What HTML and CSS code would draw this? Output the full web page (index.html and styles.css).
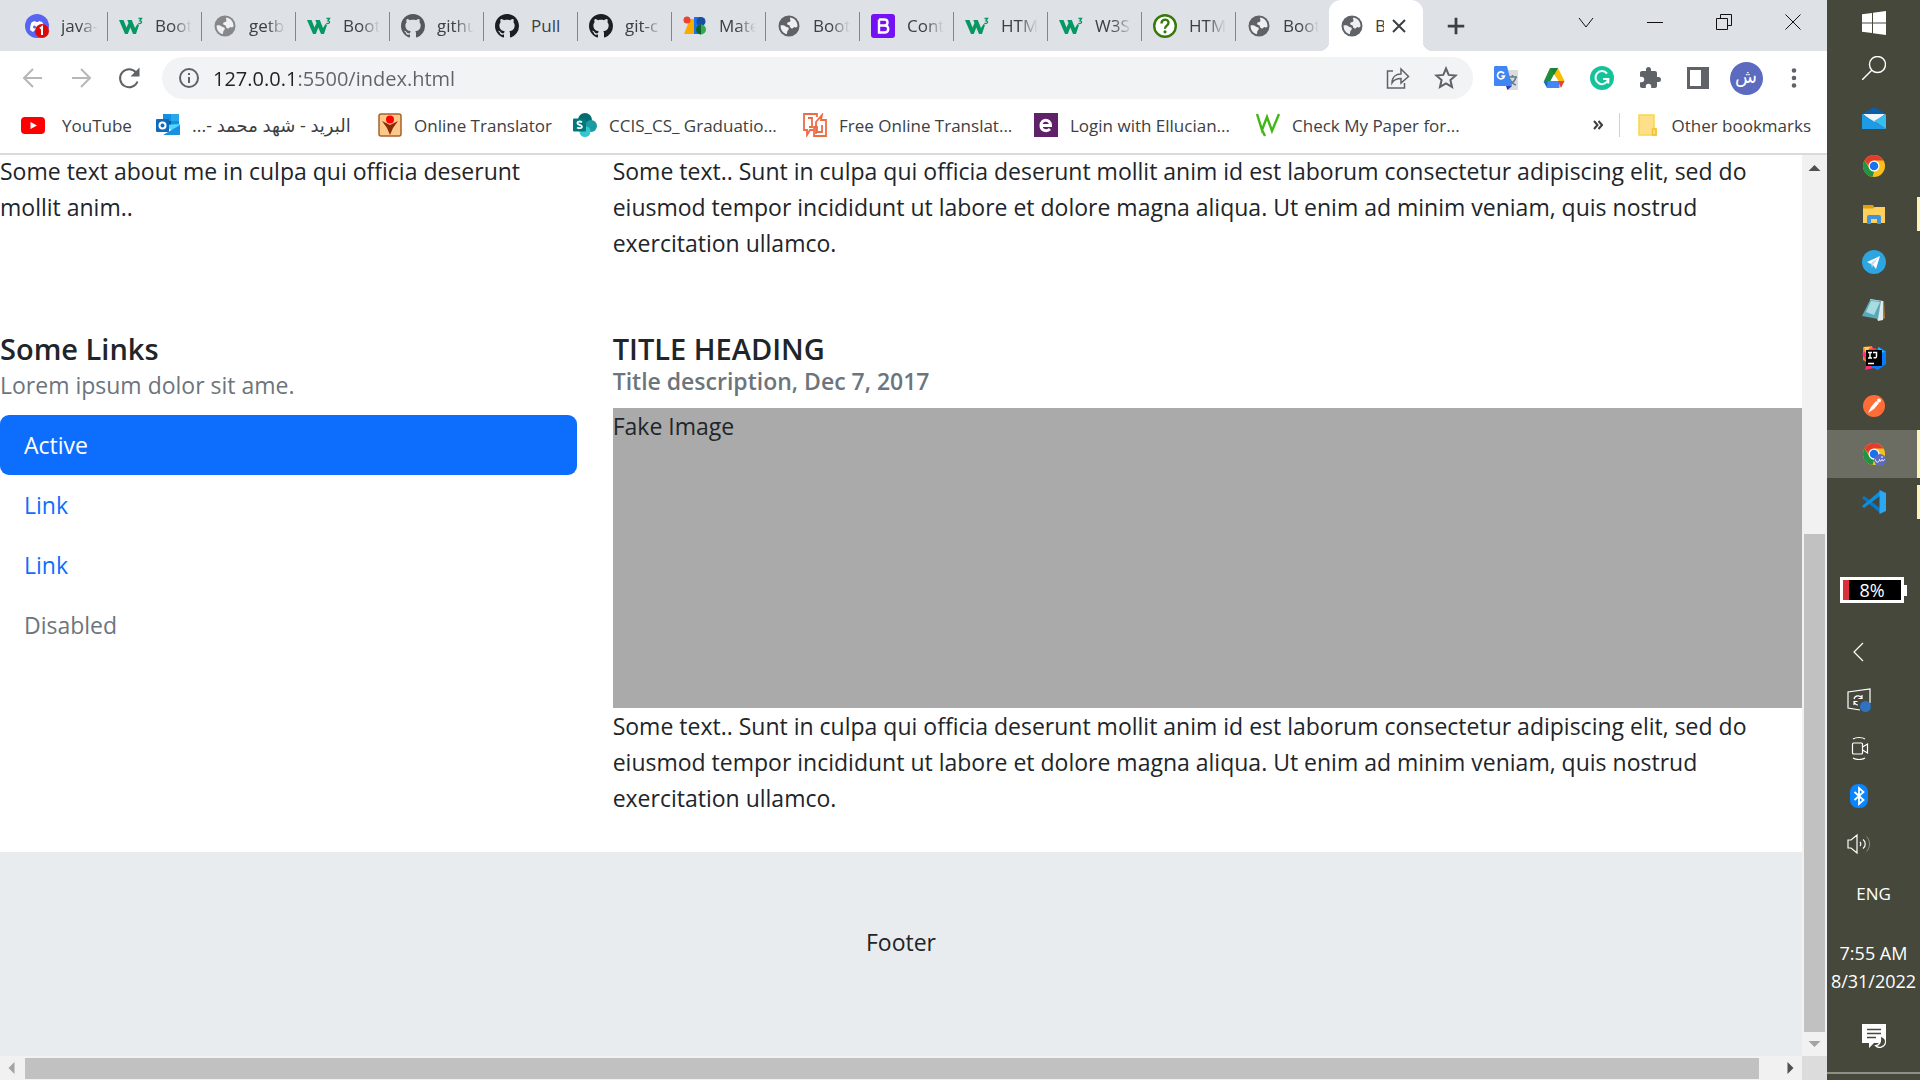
FILE: index.html
```html
<!DOCTYPE html>
<html lang="en">
<head>
<meta charset="utf-8">
<title>Bootstrap Page</title>
<link rel="stylesheet" href="styles.css">
</head>
<body>
<svg class="sprite" aria-hidden="true">
  <symbol id="w3" viewBox="0 0 24 24"><path fill="#059862" d="M0 6h4.500l3 7.500L9.500 9 8.300 6h4.500l3.200 8 2.500-4 1.500 1-3 9h-3l-2.700-6.500L8.800 20H6z"/><path fill="none" stroke="#059862" stroke-width="1.300" d="M19.500 4.500h3l-1.600 2.300c2.600 0 2.300 3.400-1.600 2.600"/></symbol>
  <symbol id="globe" viewBox="0 0 24 24"><circle cx="12" cy="12" r="10.500" fill="currentColor"/><path fill="#eef0f2" d="M13.500 3.600c3.900.8 6.900 4 7 8.400-.4 1.500-1.400 1.600-2.500 1.200-1.600-.6-1.500 1.700-3.400 1.200-2.300-.7-1-2.700-2.600-3.100-1.900-.3-2.400-1.500-1.400-2.700.8-1 2.500-.3 2.800-1.700.3-1.200-.8-2-.3-2.800zM3.600 11.500c1.700-.4 3.800-.2 5.100 1 .9.900 2.800.3 3.100 1.900.3 1.500-1.300 1.700-1.500 3-.1 1.100-.3 2-.6 2.800-3.600-1-6.300-4.400-6.100-8.700z"/></symbol>
  <symbol id="github" viewBox="0 0 16 16"><path fill="currentColor" d="M8 0C3.580 0 0 3.580 0 8c0 3.540 2.290 6.530 5.470 7.590.4.070.55-.17.55-.38 0-.19-.01-.82-.01-1.490-2.010.37-2.530-.49-2.690-.94-.09-.23-.48-.94-.82-1.130-.28-.15-.68-.52-.01-.53.63-.01 1.080.58 1.230.82.72 1.210 1.870.87 2.330.66.070-.52.28-.87.51-1.070-1.780-.2-3.640-.89-3.640-3.950 0-.87.31-1.590.82-2.150-.08-.2-.36-1.020.08-2.120 0 0 .67-.21 2.200.82.64-.18 1.320-.27 2-.27s1.360.09 2 .27c1.530-1.040 2.200-.82 2.200-.82.44 1.100.16 1.920.08 2.120.51.56.82 1.270.82 2.150 0 3.070-1.870 3.750-3.650 3.950.29.25.54.73.54 1.480 0 1.070-.01 1.930-.01 2.200 0 .21.15.46.55.38A8.010 8.010 0 0 0 16 8c0-4.420-3.580-8-8-8z"/></symbol>
  <symbol id="chrome" viewBox="0 0 24 24"><circle cx="12" cy="12" r="11" fill="#fbc116"/><path fill="#229342" d="M2.500 6.500 8 15l4 3-1.500 5A11 11 0 0 1 2.500 6.500z"/><path fill="#e33b2e" d="M2.500 6.500A11 11 0 0 1 21.500 6.500H12L7 12z"/><circle cx="12" cy="12" r="5.500" fill="#fff"/><circle cx="12" cy="12" r="4.300" fill="#1a73e8"/></symbol>
</svg>

<div class="screen">
  <div class="browser">
    <div class="tab-strip">
      <button class="tab"><svg class="icon" viewBox="0 0 24 24"><circle cx="12" cy="12" r="12" fill="#5865f2"/><path fill="#fff" d="M5 16c0-4 1-7 2-8l3-1 1 1h2l1-1 3 1c1 1 2 4 2 8l-3 2-2-2h-4l-2 2z"/><circle cx="9.500" cy="13" r="1.500" fill="#5865f2"/><circle cx="17" cy="17" r="7" fill="#dc0b0b"/><path fill="none" stroke="#fff" stroke-width="2" d="M15 14.500l2-1.500v8"/></svg><span class="tab-title">java-</span></button>
      <button class="tab"><svg class="icon"><use href="#w3"/></svg><span class="tab-title">Boot</span></button>
      <button class="tab"><svg class="icon faded"><use href="#globe"/></svg><span class="tab-title">getb</span></button>
      <button class="tab"><svg class="icon"><use href="#w3"/></svg><span class="tab-title">Boot</span></button>
      <button class="tab"><svg class="icon soft"><use href="#github"/></svg><span class="tab-title">githu</span></button>
      <button class="tab"><svg class="icon dark"><use href="#github"/></svg><span class="tab-title clear">Pull</span></button>
      <button class="tab"><svg class="icon dark"><use href="#github"/></svg><span class="tab-title">git-c</span></button>
      <button class="tab"><svg class="icon" viewBox="0 0 24 24"><path fill="#f9ab00" d="M7 5h4v15H1z"/><circle cx="4" cy="6" r="3.500" fill="#ea4335"/><path fill="#1a73e8" d="M11 3h7v17h-7z"/><circle cx="18" cy="7.500" r="4.500" fill="#174ea6"/><circle cx="18" cy="15.500" r="5" fill="#34a853"/><path fill="#0d652d" d="M18 10.500v10a5 5 0 0 1 0-10z"/></svg><span class="tab-title">Mate</span></button>
      <button class="tab"><svg class="icon"><use href="#globe"/></svg><span class="tab-title">Boot</span></button>
      <button class="tab"><svg class="icon" viewBox="0 0 24 24"><rect width="24" height="24" rx="3" fill="#7411f5"/><path fill="none" stroke="#fff" stroke-width="2.400" d="M8 5.500h5.500c4 0 4 6 0 6H8m5.500 0c5 0 5 7 0 7H8v-13"/></svg><span class="tab-title">Cont</span></button>
      <button class="tab"><svg class="icon"><use href="#w3"/></svg><span class="tab-title">HTM</span></button>
      <button class="tab"><svg class="icon"><use href="#w3"/></svg><span class="tab-title">W3S</span></button>
      <button class="tab"><svg class="icon" viewBox="0 0 24 24"><circle cx="12" cy="12" r="10.800" fill="#fff" stroke="#37790a" stroke-width="2.400"/><path fill="none" stroke="#37790a" stroke-width="2.400" d="M8.500 9.500c0-5 7-5 7-.8 0 3-3.500 2.800-3.500 6"/><circle cx="12" cy="17.800" r="1.600" fill="#37790a"/></svg><span class="tab-title">HTM</span></button>
      <button class="tab last"><svg class="icon"><use href="#globe"/></svg><span class="tab-title">Boot</span></button>
      <button class="tab active"><svg class="icon"><use href="#globe"/></svg><span class="tab-title clear">B</span><svg class="tab-close" viewBox="0 0 16 16"><path d="M2 2l12 12M14 2L2 14"/></svg></button>
      <button class="new-tab" aria-label="New tab"><svg class="icon" viewBox="0 0 24 24"><path d="M12 3v18M3 12h18"/></svg></button>
      <div class="window-controls">
        <button aria-label="Search tabs"><svg viewBox="0 0 16 16"><path d="M1 4l7 9 7-9"/></svg></button>
        <button aria-label="Minimize"><svg viewBox="0 0 16 16"><path d="M0 8.500h16"/></svg></button>
        <button aria-label="Restore"><svg viewBox="0 0 16 16"><path d="M.5 4.500h11v11H.5zM4.500 4V.5h11v11H12"/></svg></button>
        <button aria-label="Close"><svg viewBox="0 0 16 16"><path d="M.5.5l15 15M15.500.5l-15 15"/></svg></button>
      </div>
    </div>

    <div class="toolbar">
      <button class="tool pale" aria-label="Back"><svg class="icon" viewBox="0 0 24 24"><path class="line" d="M21 12H4M12 3l-9 9 9 9"/></svg></button>
      <button class="tool pale" aria-label="Forward"><svg class="icon" viewBox="0 0 24 24"><path class="line" d="M3 12h17M12 3l9 9-9 9"/></svg></button>
      <button class="tool" aria-label="Reload"><svg class="icon" viewBox="0 0 24 24"><path class="line" d="M20.500 15.500A9 9 0 1 1 19 6.500"/><path fill="currentColor" d="M22.500 1.500v9h-9z"/></svg></button>
      <div class="omnibox">
        <svg class="icon" viewBox="0 0 24 24"><circle class="line" cx="12" cy="12" r="9"/><path class="line" d="M12 11v6M12 7v2"/></svg>
        <input class="url" type="text" aria-label="Address" value="127.0.0.1:5500/index.html">
        <button class="tool" aria-label="Share"><svg class="icon" viewBox="0 0 24 24"><path class="line thin" d="M7 5H1.500v17h17v-5"/><path class="line thin" d="M6 17c0-6 4-9 9-9V3l7.500 7.500L15 17v-4.500c-4 0-7 1-9 4.500z"/></svg></button>
        <button class="tool" aria-label="Bookmark"><svg class="icon" viewBox="0 0 24 24"><path class="line" d="M12 2.500l2.700 6.400 7 .6-5.300 4.600 1.600 6.800-6-3.600-6 3.600 1.600-6.800-5.300-4.600 7-.6z"/></svg></button>
      </div>
      <button class="tool" aria-label="Translate"><svg class="icon" viewBox="0 0 24 24"><path fill="#dadce0" d="M10 4h14v20H13z"/><path fill="none" stroke="#607d8b" stroke-width="1.600" d="M14 11h9M18.500 9v2M22 11c-1 4-3 6-7 8M16 13c1 3 3 5 6 6"/><path fill="#4286f4" d="M1 0h12l5 20H1a1 1 0 0 1-1-1V1z"/><path fill="#2b3fae" d="M12 20h6l-4.500 4z"/><path fill="none" stroke="#fff" stroke-width="1.700" d="M10 7.500a3.500 3.500 0 1 0 .4 2.700H7.500"/></svg></button>
      <button class="tool" aria-label="Drive"><svg class="icon" viewBox="0 0 24 24"><path fill="#1e8e3e" d="M8 2h4l0 6L6 21l-4-6z"/><path fill="#fbbc04" d="M8 2h8l6.500 13h-6z"/><path fill="#188038" d="M8 2h8l-4 7z"/><path fill="#4285f4" d="M5.500 15h12v7H5z"/><path fill="#1967d2" d="M5.500 15L1.500 15.500 5 22z"/><path fill="#ea4335" d="M16 15h6.500L19 22z"/><path fill="#fff" d="M12 9l3.500 6h-7z"/></svg></button>
      <button class="tool" aria-label="Grammarly"><svg class="icon" viewBox="0 0 24 24"><circle cx="12" cy="12" r="12" fill="#15c39a"/><path fill="none" stroke="#fff" stroke-width="2" d="M17 7.500A6.500 6.500 0 1 0 18.300 13H13M18.300 13v4.500"/></svg></button>
      <button class="tool" aria-label="Extensions"><svg class="icon" viewBox="0 0 24 24"><path fill="currentColor" d="M20.500 11H19V7c0-1.100-.9-2-2-2h-4V3.500a2.500 2.500 0 0 0-5 0V5H4c-1.100 0-2 .9-2 2v3.800h1.500a2.700 2.700 0 0 1 0 5.400H2V20c0 1.100.9 2 2 2h3.800v-1.500a2.700 2.700 0 0 1 5.400 0V22H17c1.100 0 2-.9 2-2v-4h1.500a2.500 2.500 0 0 0 0-5z"/></svg></button>
      <button class="tool" aria-label="Side panel"><svg class="icon" viewBox="0 0 24 24"><path fill="currentColor" fill-rule="evenodd" d="M1 1h22v22H1zM4 4v16h11V4z"/></svg></button>
      <button class="tool" aria-label="Profile"><span class="avatar">ش</span></button>
      <button class="tool" aria-label="Menu"><svg class="icon" viewBox="0 0 24 24"><g fill="currentColor"><circle cx="12" cy="4.500" r="2.300"/><circle cx="12" cy="12" r="2.300"/><circle cx="12" cy="19.500" r="2.300"/></g></svg></button>
    </div>

    <nav class="bookmarks" aria-label="Bookmarks">
      <a class="bookmark wide-gap" href="#"><svg class="icon" viewBox="0 0 24 24"><rect y="4" width="24" height="17" rx="4" fill="#f00"/><path fill="#fff" d="M9.500 9l6.500 3.500L9.500 16z"/></svg>YouTube</a>
      <a class="bookmark" href="#"><svg class="icon" viewBox="0 0 24 24"><path fill="#1490df" d="M7 1h16v14H7z"/><path fill="#28a8ea" d="M15 1h8v7h-8z"/><path fill="#0a5ea8" d="M7 8h8v7H7z"/><path fill="#50d9ff" d="M7 12l17 10V11z"/><path fill="#1a8fe0" d="M7 22l17-10v9a1 1 0 0 1-1 1z"/><rect y="6" width="13" height="13" rx="1" fill="#0f6cbd"/><circle cx="6.500" cy="12.500" r="3" fill="none" stroke="#fff" stroke-width="2"/></svg><span class="arabic" dir="rtl">البريد - شهد محمد -...</span></a>
      <a class="bookmark" href="#"><svg class="icon" viewBox="0 0 24 24"><rect x="1" y="1" width="22" height="22" rx="2" fill="#fdc88c" stroke="#a5622b" stroke-width="1.500"/><path fill="#8b2a05" d="M4 8l8 4 8-4-5 7-3 7-3-7z"/><circle cx="12" cy="6.500" r="4" fill="#f00"/></svg>Online Translator</a>
      <a class="bookmark" href="#"><svg class="icon" viewBox="0 0 24 24"><circle cx="12" cy="7" r="7" fill="#036c70"/><circle cx="18" cy="13" r="6" fill="#1a9ba1"/><circle cx="12" cy="18.500" r="5.500" fill="#37c6d0"/><rect y="5.500" width="13" height="13" rx="1" fill="#03787c"/><path fill="none" stroke="#fff" stroke-width="1.800" d="M9 9.300c-2-1.400-4.700-.8-4.600.8.100 2.100 4.800 1.400 4.600 3.700-.2 1.800-3.200 1.700-4.900.6"/></svg>CCIS_CS_ Graduatio...</a>
      <a class="bookmark" href="#"><svg class="icon" viewBox="0 0 24 24"><path fill="none" stroke="#ee6c45" stroke-width="1.800" d="M14 4V1H1v16h3v5l3-5h3M5 5h4v9H6M13 21V9l6-7-1 5h5v16H11v-9h3v5h5v-7"/></svg>Free Online Translat...</a>
      <a class="bookmark" href="#"><svg class="icon" viewBox="0 0 24 24"><rect width="24" height="24" fill="#5f2167"/><path fill="none" stroke="#fff" stroke-width="3" d="M7 12.500h9.500c0-7-9.500-7-9.500 0 0 5.500 6 6.500 9 3.500"/></svg>Login with Ellucian...</a>
      <a class="bookmark" href="#"><svg class="icon" viewBox="0 0 24 24"><path fill="none" stroke="#43b516" stroke-width="2.400" d="M1 1l5 16L11 4l5 14L23 1M6 17l3 6"/></svg>Check My Paper for...</a>
      <div class="bookmark-tail">
        <button class="more" aria-label="More bookmarks"><svg viewBox="0 0 10 10"><path d="M1 1l3.500 4L1 9M5.500 1L9 5 5.500 9"/></svg></button>
        <a class="bookmark folder" href="#"><svg class="icon" viewBox="0 0 24 24"><path fill="#ffe08a" stroke="#f9d648" stroke-width="1.500" d="M4 2h15v13l2 1v6H4z"/><path fill="none" stroke="#f1c232" stroke-width="1.500" d="M17.500 22v-6h3.500v6z"/></svg>Other bookmarks</a>
      </div>
    </nav>

    <div class="viewport">
      <main class="page">
        <div class="row">
          <section class="col-4">
            <p>Some text about me in culpa qui officia deserunt mollit anim..</p>
          </section>
          <section class="col-8">
            <p>Some text.. Sunt in culpa qui officia deserunt mollit anim id est laborum consectetur adipiscing elit, sed do eiusmod tempor incididunt ut labore et dolore magna aliqua. Ut enim ad minim veniam, quis nostrud exercitation ullamco.</p>
          </section>
        </div>
        <div class="row">
          <section class="col-4">
            <h3>Some Links</h3>
            <p class="muted">Lorem ipsum dolor sit ame.</p>
            <ul class="pills">
              <li><a class="active" href="#">Active</a></li>
              <li><a href="#">Link</a></li>
              <li><a href="#">Link</a></li>
              <li><a class="disabled" aria-disabled="true">Disabled</a></li>
            </ul>
          </section>
          <section class="col-8">
            <h3>TITLE HEADING</h3>
            <h5>Title description, Dec 7, 2017</h5>
            <div class="fake-image">Fake Image</div>
            <p>Some text.. Sunt in culpa qui officia deserunt mollit anim id est laborum consectetur adipiscing elit, sed do eiusmod tempor incididunt ut labore et dolore magna aliqua. Ut enim ad minim veniam, quis nostrud exercitation ullamco.</p>
          </section>
        </div>
        <footer>Footer</footer>
      </main>
      <div class="scroll vertical">
        <svg class="arrow" viewBox="0 0 24 24"><path fill="#505050" d="M6 16l6-6 6 6z"/></svg>
        <div class="track"><div class="thumb"></div></div>
        <svg class="arrow" viewBox="0 0 24 24"><path fill="#a3a3a3" d="M6 9l6 6 6-6z"/></svg>
      </div>
      <div class="scroll horizontal">
        <svg class="arrow" viewBox="0 0 24 24"><path fill="#a3a3a3" d="M14 6l-6 6 6 6z"/></svg>
        <div class="track"><div class="thumb"></div></div>
        <svg class="arrow" viewBox="0 0 24 24"><path fill="#505050" d="M10 6l6 6-6 6z"/></svg>
      </div>
      <div class="corner"></div>
    </div>
  </div>

  <aside class="taskbar">
    <button class="system" aria-label="Start"><svg class="icon" viewBox="0 0 24 24"><path fill="#fff" d="M0 3.300L10 2v9.500H0zM11 1.800L24 0v11.500H11zM0 12.500h10V22L0 20.700zM11 12.500h13V24l-13-1.800z"/></svg></button>
    <button class="system" aria-label="Search"><svg class="icon" viewBox="0 0 24 24"><path fill="none" stroke="#fff" stroke-width="1.400" d="M0 24l10-10"/><circle cx="15.500" cy="8.500" r="8" fill="none" stroke="#fff" stroke-width="1.400"/></svg></button>
    <div class="apps">
      <button class="app" aria-label="Mail"><svg class="icon" viewBox="0 0 24 24"><path fill="#0a5dae" d="M0 8l12-7 12 7v3H0z"/><path fill="#f4f4f4" d="M1 8h22l-11 9z"/><path fill="#1d9be6" d="M0 8l13 8 11 7H0z"/><path fill="#38bdf2" d="M24 8v15L12 15z"/></svg></button>
      <button class="app" aria-label="Chrome"><svg class="icon"><use href="#chrome"/></svg></button>
      <button class="app open" aria-label="File Explorer"><svg class="icon" viewBox="0 0 24 24"><path fill="#e19f0c" d="M1 3h10l1 2v3H1z"/><path fill="#ffd15c" d="M1 6.500h10L12.500 5H23v16H1z"/><path fill="#3f95dd" d="M5 22v-7a2 2 0 0 1 2-2h10a2 2 0 0 1 2 2v7h-4v-5H9v5z"/></svg></button>
      <button class="app" aria-label="Telegram"><svg class="icon" viewBox="0 0 24 24"><circle cx="12" cy="12" r="12" fill="#2ca5e0"/><path fill="#fff" d="M5 12l13-6-4 13-3-4z"/><path fill="#c8daea" d="M9 13l7-5-5 7-1 3z"/></svg></button>
      <button class="app" aria-label="Notepad"><svg class="icon" viewBox="0 0 24 24"><path fill="#b07b35" d="M19 3h3l1 17-3 2z"/><path fill="#dfe9ec" d="M8 1l13 2v19l-5 1z"/><path fill="#5ba9b8" d="M8 2l11 1-3 18L0 18z"/><path fill="#a9dbe3" d="M9 3l9 1-6 13-8-3z"/></svg></button>
      <button class="app" aria-label="IntelliJ IDEA"><svg class="icon" viewBox="0 0 24 24"><path fill="#fc801d" d="M1 1l9-1 3 8-7 9-5-3z"/><path fill="#fe2d78" d="M0 8l6-5 8-1-2 20-9 2 2-8z"/><path fill="#fcd34d" d="M2 1l6 0-4 7z"/><path fill="#087cfa" d="M13 5l4-4 7 4v13l-8 6-7-3z"/><path fill="#21c8e8" d="M16 1l7 5-6 1z"/><path d="M4 4h16v16H4z"/><path fill="none" stroke="#fff" stroke-width="1.500" d="M6 6.500h4M8 6.500v5M6 12h4M11 6.500h3.500V10c0 2-1 2-3 1.500M6 17.500h6"/></svg></button>
      <button class="app" aria-label="Postman"><svg class="icon" viewBox="0 0 24 24"><circle cx="12" cy="12" r="11" fill="#ff6c37"/><circle cx="17" cy="6.500" r="2" fill="#fff"/><path fill="#fff" d="M14 7l3 2-5 6-6 4 3-6z"/></svg></button>
      <button class="app open current" aria-label="Chrome"><svg class="icon" viewBox="0 0 24 24"><use href="#chrome"/><circle cx="18" cy="18" r="6" fill="#5c6bc0"/><path fill="none" stroke="#fff" d="M13.500 17.500c0 4 4 3 4 0 .5 2 2 2 2.500 0 .5 2 2 1.500 2.500-.5M19 15h2"/></svg></button>
      <button class="app open" aria-label="Visual Studio Code"><svg class="icon" viewBox="0 0 24 24"><path fill="#0879c8" d="M0 8l2-2 16 12v5z"/><path fill="#0c8fdf" d="M0 16l2 2L18 6V1z"/><path fill="#2aa8f4" d="M17.500 0L24 3v18l-6.500 3z"/></svg></button>
    </div>
    <div class="battery">8%</div>
    <div class="tray">
      <button class="app" aria-label="Show hidden icons"><svg class="icon" viewBox="0 0 24 24"><path class="stroke" d="M16 3l-9 9 9 9"/></svg></button>
      <button class="app" aria-label="Sync"><svg class="icon" viewBox="0 0 24 24"><path class="stroke" d="M13 22L1 20V4l22-3v14"/><path class="stroke" d="M7 11c1-4 6-4 8-1m0-3v3.500h-3.500M7 17v-3.500h3.500M7 14c1 2 3 3 4 3"/><circle cx="18.500" cy="18.500" r="5.500" fill="#2f72bd"/></svg></button>
      <button class="app" aria-label="Camera"><svg class="icon" viewBox="0 0 24 24"><rect class="stroke" x="5.500" y="7" width="10" height="11" rx="1"/><path class="stroke" d="M15.500 11l5-3v9l-5-3M6 3c3-2 9-2 12 0M6 22c3 2 9 2 12 0"/></svg></button>
      <button class="app" aria-label="Bluetooth"><svg class="icon" viewBox="0 0 24 24"><rect x="3" width="18" height="24" rx="8" fill="#0a84ff"/><path fill="none" stroke="#fff" stroke-width="1.800" d="M7.500 8l9 8-4.500 4V4l4.500 4-9 8"/></svg></button>
      <button class="app" aria-label="Volume"><svg class="icon" viewBox="0 0 24 24"><path class="stroke" d="M1 8h3l6-5v18l-6-5H1zM13 10c1 1 1 3 0 4M16 7.500c3 2 3 7 0 9"/><path fill="none" stroke="#8b8d80" d="M19.500 4.500c4 4 4 11 0 15"/></svg></button>
    </div>
    <div class="language">ENG</div>
    <div class="clock"><span>7:55 AM</span><span>8/31/2022</span></div>
    <button class="app" aria-label="Notifications"><svg class="icon" viewBox="0 0 24 24"><path fill="#fff" d="M0 0h24v19H12l-5 5v-5H0z"/><path stroke="#46483b" stroke-width="1.500" d="M5 5.500h14M5 9.500h14M5 13.500h9"/><path fill="#46483b" stroke="#fff" stroke-width="1.200" d="M18 12.500c4 0 6 3 5.500 6-1 5-7 6.500-10 3 4 0 6-4 4.500-9z"/></svg></button>
    <div class="show-desktop"></div>
  </aside>
</div>
</body>
</html>
```
FILE: styles.css
```css
* { box-sizing: border-box; }

body {
  margin: 0;
  font-family: "Open Sans", "Noto Sans", "DejaVu Sans", sans-serif;
  color: #212529;
}

button {
  display: flex;
  align-items: center;
  justify-content: center;
  padding: 0;
  border: 0;
  background: none;
  color: inherit;
  font: inherit;
}

a { color: inherit; text-decoration: none; }

.sprite { display: none; }

.icon { flex: none; width: 24px; height: 24px; display: block; }

.line { fill: none; stroke: currentColor; stroke-width: 2; }
.thin { stroke-width: 1.5; }

.screen { display: flex; min-height: 100vh; }

.browser {
  flex: 1;
  min-width: 0;
  display: flex;
  flex-direction: column;
  background: #fff;
}

/* Tabs */
.tab-strip {
  display: flex;
  align-items: flex-start;
  height: 51px;
  padding-left: 14px;
  background: #dee1e6;
  color: #3c4043;
  font-size: 17px;
}

.tab {
  position: relative;
  flex: 0 1 94px;
  min-width: 0;
  height: 51px;
  gap: 12px;
  padding: 0 7px 0 11px;
  justify-content: flex-start;
}

.tab .icon { color: #5f6368; }
.tab .faded { color: #85878a; }
.tab .soft { color: #55585c; }
.tab .dark { color: #1b1f23; }

.tab::after {
  content: "";
  position: absolute;
  right: 0;
  top: 12px;
  width: 1px;
  height: 29px;
  background: #80868b;
}

.tab-title {
  flex: 1;
  min-width: 0;
  overflow: hidden;
  white-space: nowrap;
  text-align: left;
  -webkit-mask-image: linear-gradient(to right, #000 45%, transparent 92%);
  mask-image: linear-gradient(to right, #000 45%, transparent 92%);
}

.tab-title.clear { -webkit-mask-image: none; mask-image: none; }

.tab.last { flex-basis: 93px; }
.tab.last::after { display: none; }

.tab.active {
  gap: 11px;
  padding-right: 16px;
  background: #fff;
  border-radius: 12px 12px 0 0;
}

.tab.active .tab-title { margin-right: -4px; }

.tab.active::before,
.tab.active::after {
  content: "";
  position: absolute;
  top: auto;
  bottom: 0;
  width: 9px;
  height: 9px;
}

.tab.active::before {
  left: -9px;
  background: radial-gradient(circle at 0 0, transparent 9px, #fff 9px);
}

.tab.active::after {
  right: -9px;
  background: radial-gradient(circle at 100% 0, transparent 9px, #fff 9px);
}

.tab-close { flex: none; width: 16px; height: 16px; }
.tab-close path { stroke: #3c4043; stroke-width: 2; }

.new-tab { width: 66px; height: 51px; }
.new-tab .icon { width: 22px; height: 22px; }
.new-tab path { stroke: #3c4043; stroke-width: 3; }

.window-controls { display: flex; margin-left: auto; }
.window-controls button { width: 69px; height: 44px; }
.window-controls svg { width: 16px; height: 16px; }
.window-controls path { fill: none; stroke: #111; stroke-width: 1; }

/* Toolbar */
.toolbar {
  display: flex;
  align-items: center;
  padding: 6px 9px 0;
  color: #5f6368;
}

.tool { flex: none; width: 48px; height: 42px; }
.pale { color: #b5b7ba; }

.omnibox {
  flex: 1;
  display: flex;
  align-items: center;
  height: 42px;
  margin: 0 9px;
  padding: 0 3px 0 15px;
  border-radius: 21px;
  background: #f1f3f4;
}

.url {
  flex: 1;
  min-width: 0;
  padding: 0 12px;
  border: 0;
  outline: 0;
  font: inherit;
  font-size: 20px;
  color: transparent;
  background: linear-gradient(to right, #202124 94px, #5f6368 94px);
  -webkit-background-clip: text;
  background-clip: text;
}

.avatar {
  width: 33px;
  height: 33px;
  border-radius: 50%;
  background: #5c6bc0;
  color: #fff;
  font-size: 18px;
  line-height: 28px;
}

/* Bookmarks */
.bookmarks {
  display: grid;
  grid-template-columns: 135px 222px 195px 230px 231px 222px 1fr auto;
  align-items: center;
  height: 56px;
  padding: 0 16px 2px 21px;
  border-bottom: 2px solid #d9dadc;
  color: #3c4043;
  font-size: 17px;
  white-space: nowrap;
}

.bookmark { display: flex; align-items: center; gap: 12px; }
.wide-gap { gap: 17px; }
.arabic { font-size: 18px; }

.bookmark-tail { display: flex; align-items: center; }

.more { width: 42px; height: 24px; }
.more svg { width: 10px; height: 10px; }
.more path { fill: none; stroke: #3c4043; stroke-width: 2; }

.folder {
  padding-left: 15px;
  border-left: 1px solid #cfd1d4;
}

/* Page and scroll bars */
.viewport {
  flex: 1;
  display: grid;
  grid-template: 1fr 24px / 1fr 25px;
}

.page {
  display: flex;
  flex-direction: column;
  min-width: 0;
  overflow: hidden;
  font-size: 23px;
  line-height: 36px;
}

.row { display: flex; margin: 0 -18px 36px; }

.row:first-child { margin-bottom: 46px; }

.col-4, .col-8 { padding: 0 18px; min-width: 0; }
.col-4 { flex: 0 0 calc(100% / 3); }
.col-8 { flex: 0 0 calc(200% / 3); }

.row:first-child p { margin: -2px 0 24px; }

p { margin: 0; }

h3 {
  margin: 0;
  font-size: 29px;
  font-weight: 600;
  line-height: 36px;
}

h5 {
  margin: 0 0 12px;
  color: #6c757d;
  font-size: 23px;
  font-weight: 600;
  line-height: 29px;
}

.muted { margin-bottom: 12px; color: #6c757d; }

.pills { margin: 0; padding: 0; list-style: none; }

.pills a {
  display: block;
  padding: 12px 24px;
  border-radius: 9px;
  color: #0d6efd;
}

.pills .active { background: #0d6efd; color: #fff; }
.pills .disabled { color: #6c757d; }

.fake-image { height: 300px; background: #aaa; }

footer {
  flex: 1;
  padding: 72px 0;
  background: #e8ecef;
  text-align: center;
}

.scroll { display: flex; background: #f1f1f1; }
.vertical { flex-direction: column; }
.arrow { flex: none; width: 25px; height: 24px; }
.track { flex: 1; display: flex; }
.thumb { background: #c1c1c1; }

.vertical .track { flex-direction: column; padding: 0 2px; }
.vertical .track::before { content: ""; flex: 5; }
.vertical .thumb { flex: 7; }
.horizontal .track { padding: 2px 0 1px; }
.horizontal .thumb { flex: 0 0 99%; }
.corner { background: #dcdcdc; }

/* Taskbar */
.taskbar {
  flex: none;
  display: flex;
  flex-direction: column;
  width: 93px;
  background: #46483b;
  color: #fff;
  font-size: 18px;
  line-height: 28px;
  text-align: center;
}

.system { height: 45px; }
.apps { margin-top: 4px; }

.app { position: relative; width: 100%; height: 48px; }

.current { background: #6b6d62; }

.open::after {
  content: "";
  position: absolute;
  right: 0;
  top: 7px;
  width: 3px;
  height: 34px;
  background: #fdf3b5;
}

.current::after { top: 0; height: 48px; }

.battery {
  position: relative;
  width: 64px;
  height: 26px;
  margin: 51px 0 25px 13px;
  border: 3px solid #fff;
  background: linear-gradient(to right, #dc2f3c 6px, #000 6px);
  line-height: 20px;
}

.battery::after {
  content: "";
  position: absolute;
  left: 61px;
  top: 5px;
  width: 3px;
  height: 11px;
  background: #fff;
}

.tray { width: 63px; }
.stroke { fill: none; stroke: #fff; stroke-width: 1.2; }

.language { padding: 12px 0; font-size: 17px; }

.clock {
  display: flex;
  flex-direction: column;
  margin: 19px 0 17px;
}

.show-desktop {
  flex: 1;
  max-height: 8px;
  margin-top: auto;
  border-top: 2px solid #8e9085;
}
```
